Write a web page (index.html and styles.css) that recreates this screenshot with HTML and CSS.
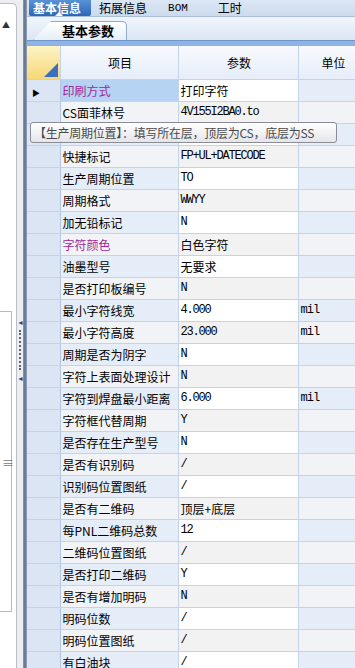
FILE: index.html
```html
<!DOCTYPE html>
<html lang="zh-CN">
<head>
  <meta charset="UTF-8" />
  <meta name="viewport" content="width=device-width, initial-scale=1.0"/>
  <title>基本信息</title>
  <link rel="stylesheet" href="styles.css">
</head>
<body>
  <div class="app">
    <!-- left dock -->
    <aside class="side">
      <div class="side-panel">
        <span class="scroll-up">&#9650;</span>
        <div class="side-box"></div>
        <span class="side-grip">&#8801;</span>
      </div>
      <div class="side-rail">
        <span class="rail-arrow rail-arrow-top">&#9668;</span>
        <span class="rail-dots"></span>
        <span class="rail-arrow rail-arrow-bottom">&#9668;</span>
      </div>
    </aside>
    <div class="splitter"></div>

    <main class="main">
      <nav class="tabs">
        <span class="tab active">基本信息</span>
        <span class="tab tab-ext">拓展信息</span>
        <span class="tab tab-bom">BOM</span>
        <span class="tab">工时</span>
      </nav>
      <div class="subtabs">
        <span class="subtab">基本参数</span>
      </div>
      <div class="grid-top"></div>

      <table class="grid">
        <thead>
          <tr>
            <th class="corner"></th>
            <th class="col-item">项目</th>
            <th class="col-param">参数</th>
            <th class="col-unit">单位</th>
          </tr>
        </thead>
        <tbody id="gridBody"></tbody>
      </table>

      <div class="tooltip">【生产周期位置】：填写所在层，顶层为CS，底层为SS</div>
    </main>
  </div>

  <script>
    const rows = [
      ["印刷方式", "打印字符", "", "pick"],
      ["CS面菲林号", "4V155I2BA0.to", ""],
      ["", "", ""],
      ["快捷标记", "FP+UL+DATECODE", ""],
      ["生产周期位置", "TO", ""],
      ["周期格式", "WWYY", ""],
      ["加无铅标记", "N", ""],
      ["字符颜色", "白色字符", "", "pick"],
      ["油墨型号", "无要求", ""],
      ["是否打印板编号", "N", ""],
      ["最小字符线宽", "4.000", "mil"],
      ["最小字符高度", "23.000", "mil"],
      ["周期是否为阴字", "N", ""],
      ["字符上表面处理设计", "N", ""],
      ["字符到焊盘最小距离", "6.000", "mil"],
      ["字符框代替周期", "Y", ""],
      ["是否存在生产型号", "N", ""],
      ["是否有识别码", "/", ""],
      ["识别码位置图纸", "/", ""],
      ["是否有二维码", "顶层+底层", ""],
      ["每PNL二维码总数", "12", ""],
      ["二维码位置图纸", "/", ""],
      ["是否打印二维码", "Y", ""],
      ["是否有增加明码", "N", ""],
      ["明码位数", "/", ""],
      ["明码位置图纸", "/", ""],
      ["有白油块", "/", ""]
    ];

    const body = document.getElementById("gridBody");
    rows.forEach((r, i) => {
      const tr = document.createElement("tr");
      tr.className = i % 2 ? "odd" : "even";
      if (i === 0) tr.classList.add("current");
      const cjk = /[\u4e00-\u9fff]/.test(r[1]);
      tr.innerHTML =
        `<td class="rowhead">${i === 0 ? '<span class="pointer">&#9654;</span>' : ''}</td>` +
        `<td class="item${r[3] ? ' pick' : ''}">${r[0]}</td>` +
        `<td class="param${cjk ? ' cjk' : ''}">${r[1]}</td>` +
        `<td class="unit">${r[2]}</td>`;
      body.appendChild(tr);
    });
  </script>
</body>
</html>
```

FILE: styles.css
```css
* {
  box-sizing: border-box;
}
body {
  margin: 0;
  font-family: "Noto Sans CJK SC", "Liberation Sans", sans-serif;
  font-size: 12px;
  color: #000;
  background: #fff;
  overflow: hidden;
}
.app {
  display: flex;
  height: 668px;
  width: 355px;
  position: relative;
}

/* left dock */
.side {
  width: 23px;
  display: flex;
  background: #eceef2;
  flex: none;
}
.side-panel {
  width: 17px;
  background: #fff;
  border-right: 1px solid #b9bec7;
  border-top: 1px solid #b9bec7;
  border-top-right-radius: 5px;
  margin-top: 3px;
  position: relative;
}
.scroll-up {
  position: absolute;
  top: 15px;
  left: 2px;
  font-size: 8px;
  color: #333;
}
.side-box {
  position: absolute;
  top: 307px;
  left: 0;
  width: 12px;
  height: 301px;
  border-top: 1px solid #b5b9c0;
  border-right: 1px solid #b5b9c0;
  border-bottom: 1px solid #b5b9c0;
}
.side-grip {
  position: absolute;
  top: 450px;
  left: 2px;
  font-size: 12px;
  color: #777;
}
.side-rail {
  width: 6px;
  position: relative;
}
.rail-arrow {
  position: absolute;
  left: 0;
  font-size: 7px;
  color: #3c4a60;
}
.rail-arrow-top { top: 317px; }
.rail-arrow-bottom { top: 373px; }
.rail-dots {
  position: absolute;
  left: 2px;
  top: 330px;
  height: 40px;
  border-left: 2px dotted #55657e;
}
.splitter {
  width: 4px;
  flex: none;
  background: linear-gradient(to right, #8e9bb0, #5d6f8c, #9aa7bb);
}

/* main */
.main {
  flex: 1;
  min-width: 0;
  display: flex;
  flex-direction: column;
}
.tabs {
  height: 17px;
  flex: none;
  display: flex;
  align-items: flex-start;
  background: linear-gradient(#dce7f6, #cbdaee);
  border-bottom: 1px solid #a9bfdc;
  padding-left: 2px;
}
.tab {
  height: 16px;
  line-height: 16px;
  padding: 0 10px;
  font-size: 12px;
  white-space: nowrap;
}
.tab.active {
  background: linear-gradient(#5a92d8, #2c66b6);
  color: #fff;
  font-weight: bold;
  padding: 0 10px 0 4px;
  border-radius: 0 0 2px 2px;
  position: relative;
}
.tab.active::after {
  content: "";
  position: absolute;
  left: 26px;
  bottom: 0;
  border: 4px solid transparent;
  border-bottom-color: #fff;
  border-top: 0;
}
.tab-ext {
  padding-left: 8px;
}
.tab-bom {
  font-family: "Liberation Mono", monospace;
  font-size: 11px;
  padding-left: 11px;
  padding-right: 20px;
}
.subtabs {
  height: 23px;
  flex: none;
  display: flex;
  align-items: flex-end;
  padding-left: 6px;
  background: linear-gradient(#f0f5fb, #dbe6f4);
}
.subtab {
  height: 19px;
  line-height: 18px;
  padding: 0 12px 0 28px;
  font-size: 13px;
  font-weight: bold;
  background: linear-gradient(#ffffff, #e6eef9);
  border: 1px solid #92aacb;
  border-bottom: 0;
  border-radius: 0 5px 0 0;
  clip-path: polygon(18px 0, 100% 0, 100% 100%, 0 100%);
}
.grid-top {
  height: 6px;
  flex: none;
  background: #8eb3e4;
  border-top: 1px solid #6f95c8;
}

.grid {
  border-collapse: collapse;
  table-layout: fixed;
  width: 340px;
}
.grid th, .grid td {
  border-right: 1px solid #c3d3ec;
  border-bottom: 1px solid #c3d3ec;
  padding: 0 0 0 2px;
  white-space: nowrap;
  overflow: hidden;
}
.grid th {
  height: 33px;
  font-weight: normal;
  font-size: 12px;
  background: linear-gradient(#f7f9fd, #e6eef9);
  text-align: center;
}
.grid th.corner {
  width: 33px;
  background: linear-gradient(#fdf3c6, #f7d876);
  position: relative;
}
.grid th.corner::after {
  content: "";
  position: absolute;
  right: 2px;
  bottom: 2px;
  border-left: 14px solid transparent;
  border-bottom: 14px solid #3a70c0;
}
.grid th.col-item { width: 118px; }
.grid th.col-param { width: 120px; }
.grid th.col-unit { width: 69px; }

.grid td {
  height: 22px;
}
.grid td.rowhead {
  background: #dbe5f4;
  border-right: 1px solid #b3c5e0;
}
.pointer {
  font-size: 8px;
  padding-left: 3px;
}
.grid td.item { background: #e5edf9; }
.grid tr.odd td.item { background: #f1f3f7; }
.grid td.item.pick { color: #a0269c; }
.grid tr.current td.item { background: #b6d3f4; }
.grid td.param {
  background: #fff;
  font-family: "Liberation Mono", monospace;
  font-size: 12px;
  letter-spacing: -1.2px;
}
.grid tr.odd td.param { background: #f2f2f2; }
.grid td.param.cjk {
  font-family: "Noto Sans CJK SC", sans-serif;
  font-size: 12px;
  letter-spacing: 0;
}
.grid td.unit {
  background: #e5edf9;
  font-family: "Liberation Mono", monospace;
  font-size: 12px;
  letter-spacing: -1px;
}
.grid tr.odd td.unit { background: #f1f3f7; }

.tooltip {
  position: absolute;
  left: 30px;
  top: 122px;
  width: 307px;
  height: 21px;
  line-height: 19px;
  padding: 0 3px;
  font-size: 12px;
  letter-spacing: -0.25px;
  color: #4a4a4a;
  background: linear-gradient(#ffffff, #e4e5ea);
  border: 1px solid #8a8d95;
  border-radius: 3px;
  white-space: nowrap;
}
```
